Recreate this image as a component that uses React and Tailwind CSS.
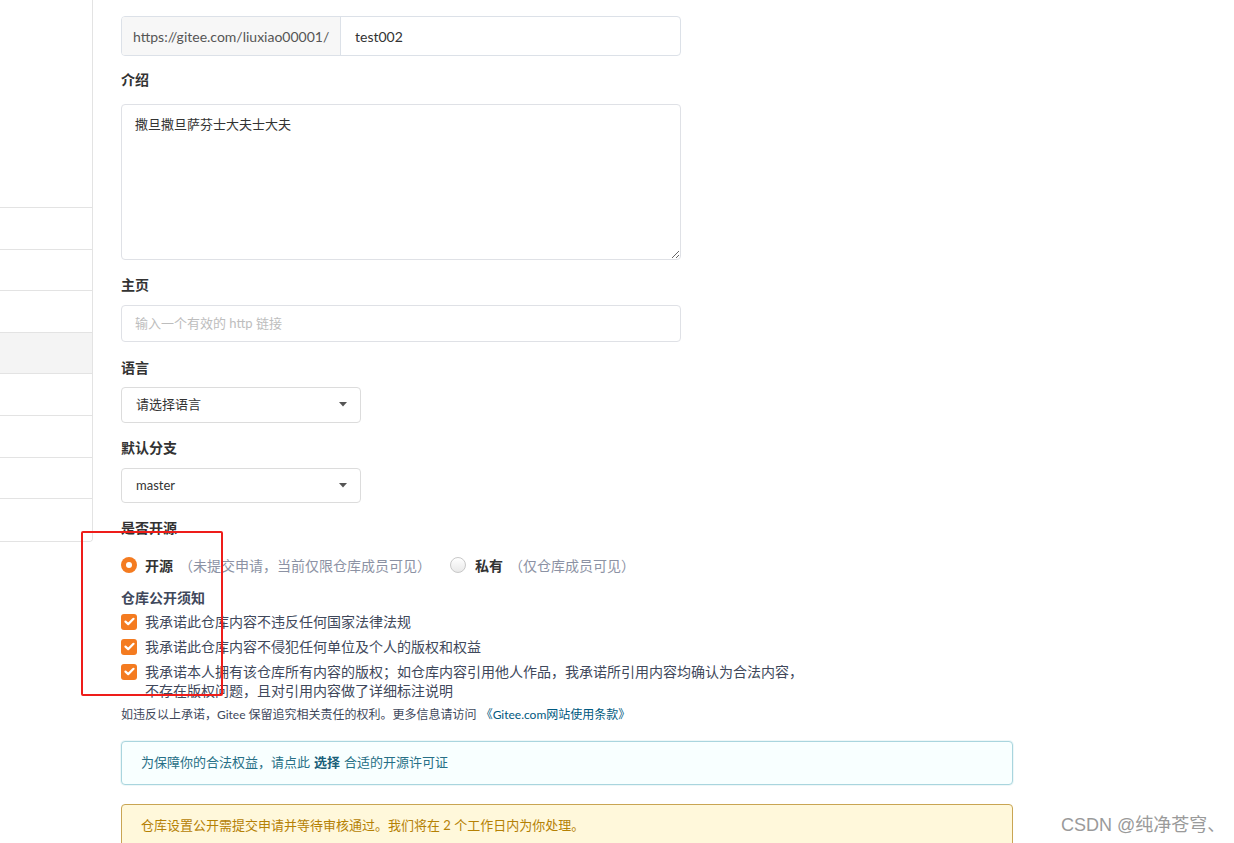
import React from "react";

function Label({ children, className = "" }) {
  return (
    <div className={"h-[20px] leading-[20px] text-[14px] font-bold text-[#333] " + className}>
      {children}
    </div>
  );
}

function Caret() {
  return (
    <svg width="8" height="5" viewBox="0 0 8 5" className="absolute right-[13px] top-[50%] -translate-y-[60%]">
      <path d="M0 0 L8 0 L4 4.5 Z" fill="#555" />
    </svg>
  );
}

function Check() {
  return (
    <span className="w-[16px] h-[16px] rounded-[3px] bg-[#f47b20] flex items-center justify-center shrink-0 mt-[1.5px]">
      <svg width="11" height="9" viewBox="0 0 11 9">
        <path d="M1.5 4.6 L4.2 7.1 L9.5 1.8" stroke="#fff" strokeWidth="2.2" fill="none" strokeLinecap="round" strokeLinejoin="round" />
      </svg>
    </span>
  );
}

export default function App() {
  const rows = [false, false, false, true, false, false, false, false];
  return (
    <div className="relative w-[1234px] h-[843px] overflow-hidden bg-white font-['Lato','Noto_Sans_CJK_SC',sans-serif] text-[#333]">
      <div className="flex">
        {/* sidebar */}
        <div className="w-[93px] shrink-0">
          <div className="border-r border-b border-[#e3e3e3] rounded-br-[4px] overflow-hidden">
            <div className="h-[208px] border-b border-[#e3e3e3]" />
            {rows.map((g, i) => (
              <div
                key={i}
                className={
                  "h-[41.6px] border-[#e3e3e3] " +
                  (i < rows.length - 1 ? "border-b " : "") +
                  (g ? "bg-[#f4f4f4]" : "bg-white")
                }
              />
            ))}
          </div>
        </div>

        {/* main */}
        <div className="pl-[28px] flex flex-col">
          <div className="mt-[16px] w-[560px] h-[40px] flex border border-[#dce1e8] rounded-[4px] overflow-hidden text-[14px]">
            <div className="w-[219px] shrink-0 bg-[#f7f7f7] border-r border-[#dce1e8] flex items-center pl-[11px] text-[#555]">
              https://gitee.com/liuxiao00001/
            </div>
            <div className="flex-1 flex items-center pl-[14px] text-[#333]">test002</div>
          </div>

          <Label className="mt-[14px]">介绍</Label>
          <textarea
            className="mt-[14px] w-[560px] h-[156px] border border-[#dfe1e6] rounded-[4px] px-[13px] py-[10px] text-[13px] leading-[18px] text-[#333] outline-none resize-y"
            defaultValue="撒旦撒旦萨芬士大夫士大夫"
          />

          <Label className="mt-[15px]">主页</Label>
          <div className="mt-[10px] w-[560px] h-[37px] border border-[#dfe1e6] rounded-[4px] flex items-center pl-[13px] text-[13px] text-[#bdbdbd]">
            输入一个有效的 http 链接
          </div>

          <Label className="mt-[16px]">语言</Label>
          <div className="relative mt-[9px] w-[240px] h-[36px] border border-[#dcdcdc] rounded-[4px] flex items-center pl-[14px] text-[13px] text-[#333]">
            请选择语言
            <Caret />
          </div>

          <Label className="mt-[15px]">默认分支</Label>
          <div className="relative mt-[10px] w-[240px] h-[35px] border border-[#dcdcdc] rounded-[4px] flex items-center pl-[14px] text-[13px] text-[#333]">
            master
            <Caret />
          </div>

          <Label className="mt-[15px]">是否开源</Label>

          <div className="mt-[17px] h-[20px] flex items-center text-[14px]">
            <span className="w-[16px] h-[16px] rounded-full bg-[#f47b20] flex items-center justify-center">
              <span className="w-[6px] h-[6px] rounded-full bg-white" />
            </span>
            <span className="ml-[8px] font-bold text-[#333]">开源</span>
            <span className="ml-[6px] text-[#8c92a4]">（未提交申请，当前仅限仓库成员可见）</span>
            <span className="ml-[19px] w-[16px] h-[16px] rounded-full border border-[#c8c8c8] bg-gradient-to-b from-white to-[#e9e9e9]" />
            <span className="ml-[9px] font-bold text-[#333]">私有</span>
            <span className="ml-[6px] text-[#8c92a4]">（仅仓库成员可见）</span>
          </div>

          <div className="mt-[13px] h-[20px] leading-[20px] text-[14px] font-bold text-[#40485b]">仓库公开须知</div>

          <div className="mt-[4px] flex flex-col gap-[6px] text-[14px] leading-[19px] text-[#40485b]">
            <div className="flex gap-[8px]">
              <Check />
              <span>我承诺此仓库内容不违反任何国家法律法规</span>
            </div>
            <div className="flex gap-[8px]">
              <Check />
              <span>我承诺此仓库内容不侵犯任何单位及个人的版权和权益</span>
            </div>
            <div className="flex gap-[8px]">
              <Check />
              <span className="w-[670px]">
                我承诺本人拥有该仓库所有内容的版权；如仓库内容引用他人作品，我承诺所引用内容均确认为合法内容，
                <br />
                不存在版权问题，且对引用内容做了详细标注说明
              </span>
            </div>
          </div>

          <div className="mt-[6px] h-[18px] leading-[18px] text-[12px] text-[#40485b]">
            如违反以上承诺，Gitee 保留追究相关责任的权利。更多信息请访问
            <span className="ml-[4px] text-[#005980]">《Gitee.com网站使用条款》</span>
          </div>

          <div className="mt-[17px] w-[892px] h-[44px] border border-[#a9d5de] bg-[#f8ffff] rounded-[4px] flex items-center pl-[19px] text-[13px] text-[#276f86] shadow-[0_0_0_1px_rgba(169,213,222,0.2)]">
            为保障你的合法权益，请点此<span className="mx-[4px] font-bold text-[#1a5f79]">选择</span>合适的开源许可证
          </div>

          <div className="mt-[19px] w-[892px] h-[44px] border border-[#c9a553] bg-[#fff8db] rounded-[4px] flex items-center pl-[19px] text-[13px] text-[#b58105]">
            仓库设置公开需提交申请并等待审核通过。我们将在 2 个工作日内为你处理。
          </div>
        </div>
      </div>

      {/* annotation overlay */}
      <div className="absolute left-[81px] top-[531px] w-[142px] h-[165px] border-2 border-[#ee1d1a] rounded-[2px] pointer-events-none" />

      {/* watermark */}
      <div className="absolute left-[1061px] top-[813px] text-[18px] leading-[24px] text-[#9a9a9a] font-['Liberation_Sans','Noto_Sans_CJK_SC',sans-serif]">
        CSDN @纯净苍穹、
      </div>
    </div>
  );
}
